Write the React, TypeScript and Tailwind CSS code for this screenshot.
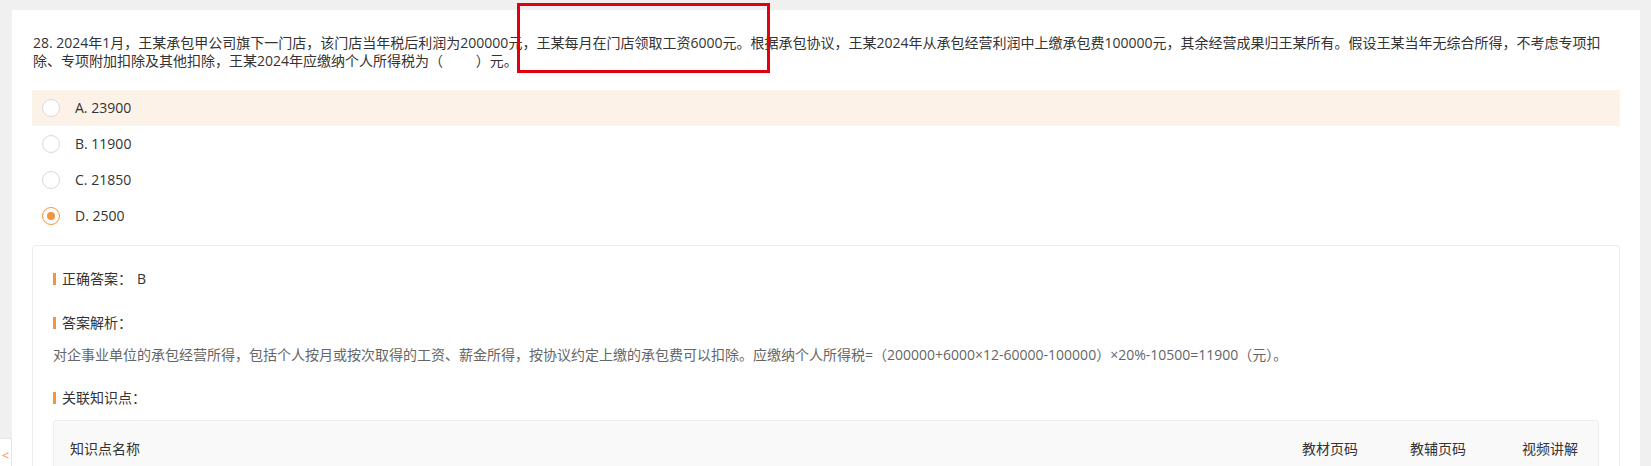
import React from "react";

const font = {
  fontFamily: '"Open Sans", "Noto Sans CJK SC", sans-serif',
};

function Radio({ checked }: { checked?: boolean }) {
  return checked ? (
    <span className="flex h-[18px] w-[18px] shrink-0 items-center justify-center rounded-full border border-[#f3953f] bg-white">
      <span className="h-[8px] w-[8px] rounded-full bg-[#f3953f]" />
    </span>
  ) : (
    <span className="h-[18px] w-[18px] shrink-0 rounded-full border border-[#d9d9d9] bg-white" />
  );
}

function Option({
  label,
  checked,
  hover,
}: {
  label: string;
  checked?: boolean;
  hover?: boolean;
}) {
  return (
    <div
      className={`flex h-[36px] items-center pl-[10px] ${
        hover ? "bg-[#fdf2e8]" : ""
      }`}
    >
      <Radio checked={checked} />
      <span className="ml-[15px] -translate-y-[1px] text-[14px] text-[#333333]">
        {label}
      </span>
    </div>
  );
}

function Heading({ children }: { children: React.ReactNode }) {
  return (
    <div className="flex h-[20px] items-center">
      <span className="h-[12px] w-[3px] bg-[#f3953f]" />
      <span className="ml-[6px] text-[14px] leading-[20px] text-[#333333]">
        {children}
      </span>
    </div>
  );
}

export default function App() {
  return (
    <div
      className="relative min-h-[466px] w-full overflow-hidden bg-[#f0f0f0] pl-[12px] pr-[11px] pt-[10px]"
      style={font}
    >
      <div className="bg-white px-[20px] pb-[40px] pt-[24px]">
        <div className="pl-[1px] text-[14px] leading-[18px] text-[#333333]">
          <div className="whitespace-nowrap">
            28. 2024年1月，王某承包甲公司旗下一门店，该门店当年税后利润为200000元，王某每月在门店领取工资6000元。根据承包协议，王某2024年从承包经营利润中上缴承包费100000元，其余经营成果归王某所有。假设王某当年无综合所得，不考虑专项扣
          </div>
          <div className="whitespace-nowrap">
            除、专项附加扣除及其他扣除，王某2024年应缴纳个人所得税为（&nbsp;&nbsp;&nbsp;&nbsp;&nbsp;&nbsp;&nbsp;&nbsp;&nbsp;）元。
          </div>
        </div>

        <div className="mt-[20px]">
          <Option label="A. 23900" hover />
          <Option label="B. 11900" />
          <Option label="C. 21850" />
          <Option label="D. 2500" checked />
        </div>

        <div className="mt-[11px] rounded-[4px] border border-[#ececec] px-[20px] pb-[30px] pt-[23px]">
          <div className="flex h-[20px] items-center">
            <span className="h-[12px] w-[3px] bg-[#f3953f]" />
            <span className="ml-[6px] text-[14px] leading-[20px] text-[#333333]">
              正确答案：
            </span>
            <span className="ml-[5px] text-[14px] leading-[20px] text-[#333333]">
              B
            </span>
          </div>

          <div className="mt-[24px]">
            <Heading>答案解析：</Heading>
          </div>

          <div className="mt-[12px] text-[14px] leading-[20px] text-[#666666]">
            对企事业单位的承包经营所得，包括个人按月或按次取得的工资、薪金所得，按协议约定上缴的承包费可以扣除。应缴纳个人所得税=（200000+6000×12-60000-100000）×20%-10500=11900（元）。
          </div>

          <div className="mt-[23px]">
            <Heading>关联知识点：</Heading>
          </div>

          <div className="mt-[12px] rounded-[3px] border border-[#eeeeee] bg-[#f9f9f9]">
            <div className="flex h-[54px] items-center text-[14px] text-[#333333]">
              <div className="flex-1 pl-[16px]">知识点名称</div>
              <div className="w-[108px]">教材页码</div>
              <div className="w-[112px]">教辅页码</div>
              <div className="w-[76px]">视频讲解</div>
            </div>
            <div className="h-[60px] border-t border-[#eeeeee] bg-white" />
          </div>
        </div>
      </div>

      {/* red annotation box */}
      <div className="pointer-events-none absolute left-[517px] top-[3px] h-[70px] w-[253px] border-[3px] border-[#e0000f]" />

      {/* side collapse tab */}
      <div className="absolute left-0 top-[438px] flex h-[40px] w-[12px] items-start justify-center rounded-r-[3px] border border-l-0 border-[#e5e5e5] bg-white pt-[8px] text-[13px] leading-[16px] text-[#f3953f]">
        &lt;
      </div>
    </div>
  );
}
